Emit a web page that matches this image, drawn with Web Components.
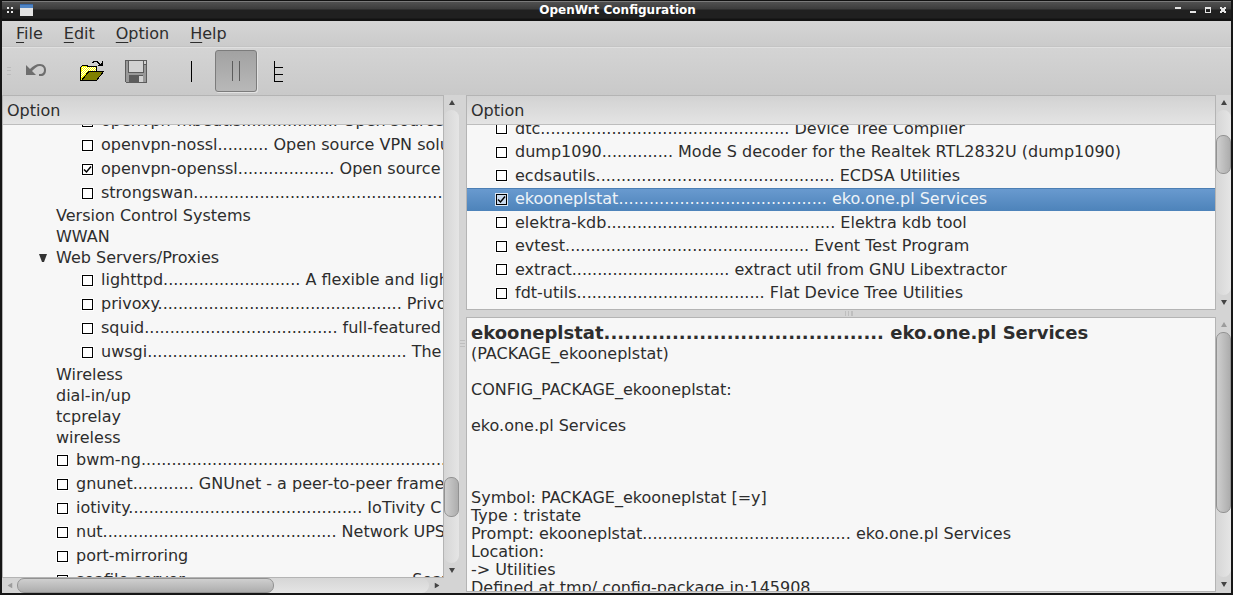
<!DOCTYPE html>
<html lang="en">
<head>
<meta charset="utf-8">
<title>OpenWrt Configuration</title>
<style>
  html, body { height: 100%; margin: 0; overflow: hidden; }
  body { font: 16px/18px "DejaVu Sans", sans-serif; color: #2d2d2d; background: #161616; }
</style>
</head>
<body>
<app-window>
  <span slot="title">OpenWrt Configuration</span>
  <menu-bar slot="bars">
    <menu-item key="F">ile</menu-item>
    <menu-item key="E">dit</menu-item>
    <menu-item key="O">ption</menu-item>
    <menu-item key="H">elp</menu-item>
  </menu-bar>
  <tool-bar slot="bars"></tool-bar>
  <tree-view class="menu" slot="left" heading="Option" style="--scrolled:-16px">
    <tree-item depth="2" check>openvpn-mbedtls................... Open source</tree-item>
    <tree-item depth="2" check>openvpn-nossl.......... Open source VPN solu</tree-item>
    <tree-item depth="2" check checked>openvpn-openssl................... Open source V</tree-item>
    <tree-item depth="2" check>strongswan..................................................</tree-item>
    <tree-item depth="1">Version Control Systems</tree-item>
    <tree-item depth="1">WWAN</tree-item>
    <tree-item depth="1" open>Web Servers/Proxies</tree-item>
    <tree-item depth="2" check>lighttpd........................... A flexible and ligh</tree-item>
    <tree-item depth="2" check>privoxy................................................ Privo</tree-item>
    <tree-item depth="2" check>squid...................................... full-featured W</tree-item>
    <tree-item depth="2" check>uwsgi................................................... The u</tree-item>
    <tree-item depth="1">Wireless</tree-item>
    <tree-item depth="1">dial-in/up</tree-item>
    <tree-item depth="1">tcprelay</tree-item>
    <tree-item depth="1">wireless</tree-item>
    <tree-item depth="1" check>bwm-ng............................................................</tree-item>
    <tree-item depth="1" check>gnunet............ GNUnet - a peer-to-peer framew</tree-item>
    <tree-item depth="1" check>iotivity.............................................. IoTivity C</tree-item>
    <tree-item depth="1" check>nut.............................................. Network UPS</tree-item>
    <tree-item depth="1" check>port-mirroring</tree-item>
    <tree-item depth="1" check>seafile-server............................................ Seaf</tree-item>
  </tree-view>
  <scroll-bar slot="left-v" before="369" thumb="38" after="46"></scroll-bar>
  <scroll-bar slot="left-h" horizontal before="0" thumb="256" after="156"></scroll-bar>
  <tree-view class="config" slot="list" heading="Option" even style="--scrolled:-8px">
    <tree-item depth="0" check>dtc................................................. Device Tree Compiler</tree-item>
    <tree-item depth="0" check>dump1090.............. Mode S decoder for the Realtek RTL2832U (dump1090)</tree-item>
    <tree-item depth="0" check>ecdsautils............................................... ECDSA Utilities</tree-item>
    <tree-item depth="0" check checked selected>ekooneplstat......................................... eko.one.pl Services</tree-item>
    <tree-item depth="0" check>elektra-kdb............................................. Elektra kdb tool</tree-item>
    <tree-item depth="0" check>evtest................................................ Event Test Program</tree-item>
    <tree-item depth="0" check>extract............................... extract util from GNU Libextractor</tree-item>
    <tree-item depth="0" check>fdt-utils..................................... Flat Device Tree Utilities</tree-item>
  </tree-view>
  <scroll-bar slot="list-v" before="25" thumb="38" after="123"></scroll-bar>
  <info-view slot="info">
    <span slot="heading">ekooneplstat......................................... eko.one.pl Services</span>(PACKAGE_ekooneplstat)

CONFIG_PACKAGE_ekooneplstat:

eko.one.pl Services



Symbol: PACKAGE_ekooneplstat [=y]
Type : tristate
Prompt: ekooneplstat......................................... eko.one.pl Services
Location:
-&gt; Utilities
Defined at tmp/.config-package.in:145908</info-view>
  <scroll-bar slot="info-v" at-start before="0" thumb="180" after="65"></scroll-bar>
</app-window>

<script>
class Base extends HTMLElement {
  connectedCallback() {
    if (this.shadowRoot) return;
    this.attachShadow({ mode: 'open' }).innerHTML = this.render();
  }
}

/* Window frame: title bar, bars, and the three split panes */
customElements.define('app-window', class extends Base {
  render() {
    return `<style>
      :host { display: flex; flex-direction: column; height: 100%; box-sizing: border-box;
        padding: 0 2px 2px; background: #161616; }
      header { display: flex; align-items: center; height: 21px; flex: none; box-sizing: border-box;
        padding: 0 1px 2px 3px; color: #fff;
        border-top: 1px solid #111;
        background: linear-gradient(#7a7a7a 0 1px, #505050 1px, #3c3c3c 8px, #202020 9px, #202020 17px, #121212 18px); }
      .side { flex: 1; display: flex; align-items: center; gap: 5px; }
      .side.right { justify-content: flex-end; gap: 0; }
      h1 { margin: 0; font: bold 12px/18px "DejaVu Sans", sans-serif; }
      .right button { all: unset; width: 15px; height: 16px; display: grid; place-items: center; }
      svg { display: block; }
      main { flex: 1; min-height: 0; display: grid; background: #d4d4d4;
        grid-template-columns: minmax(0, 464fr) minmax(0, 765fr); }
      .left { display: grid; min-height: 0; grid-template: minmax(0, 1fr) 15px / minmax(0, 1fr) 15px 7px; }
      .right-col { display: grid; min-height: 0; grid-template-rows: minmax(0, 215fr) 7px minmax(0, 276fr); }
      .pane { display: grid; grid-template: minmax(0, 1fr) / minmax(0, 1fr) 15px; min-height: 0; }
      .pane.info { padding-bottom: 1px; }
      .grip { display: grid; place-items: center; }
      .left .grip { grid-row: 1 / 3; grid-column: 3; }
      .left ::slotted(scroll-bar[horizontal]) { grid-row: 2; grid-column: 1; }
    </style>
    <header>
      <div class="side">
        <svg width="10" height="12" shape-rendering="crispEdges" fill="#e8e8e8"><path d="M2 3h2v2H2zM6 3h2v2H6zM2 7h2v2H2zM6 7h2v2H6z"/></svg>
        <svg width="13" height="12" viewBox="0 0 13 12"><path fill="#e4e4e4" d="M0 0h13v12H0z"/><path fill="#4f84c4" d="M0 0h13v4H0z"/><path fill="#3567a8" d="M0 0h13v1H0z"/></svg>
      </div>
      <h1><slot name="title"></slot></h1>
      <div class="side right">
        <button aria-label="Shade"><svg width="8" height="8" shape-rendering="crispEdges"><path fill="#e4e4e4" d="M1 1h6v2H1z"/></svg></button>
        <button aria-label="Minimize"><svg width="8" height="8" shape-rendering="crispEdges"><path fill="#e4e4e4" d="M1 5h6v2H1z"/></svg></button>
        <button aria-label="Maximize"><svg width="8" height="8" shape-rendering="crispEdges"><path fill="#e4e4e4" fill-rule="evenodd" d="M1 1h6v6H1zM2 3v3h4V3z"/></svg></button>
        <button aria-label="Close"><svg width="8" height="8" shape-rendering="crispEdges"><path fill="#e4e4e4" d="M1 1h2v1h2V1h2v2H6v2h1v2H5V6H3v1H1V5h1V3H1z"/></svg></button>
      </div>
    </header>
    <slot name="bars"></slot>
    <main>
      <div class="left">
        <slot name="left"></slot><slot name="left-v"></slot><slot name="left-h"></slot>
        <div class="grip"><svg width="5" height="8" shape-rendering="crispEdges"><path fill="#bebebe" d="M0 0h5v1H0zM0 3h5v1H0zM0 6h5v1H0z"/></svg></div>
      </div>
      <div class="right-col">
        <div class="pane"><slot name="list"></slot><slot name="list-v"></slot></div>
        <div class="grip"><svg width="8" height="5" shape-rendering="crispEdges"><path fill="#bebebe" d="M0 0h1v5H0zM3 0h1v5H3zM6 0h2v5H6z"/></svg></div>
        <div class="pane info"><slot name="info"></slot><slot name="info-v"></slot></div>
      </div>
    </main>`;
  }
});

customElements.define('menu-bar', class extends Base {
  render() {
    return `<style>
      :host { display: flex; flex: none; height: 26px; padding-left: 3px; box-sizing: border-box;
        background: linear-gradient(#d5d5d5, #cbcbcb); border-bottom: 1px solid #c4c4c4; }
    </style><slot></slot>`;
  }
});

customElements.define('menu-item', class extends Base {
  render() {
    return `<style>
      :host { display: block; }
      button { all: unset; height: 25px; line-height: 25px; padding: 0 11px 0 10px; }
      :host(:first-child) button { padding: 0 11px; }
      u { text-decoration-thickness: 1px; text-underline-offset: 3px; }
    </style><button><u>${this.getAttribute('key')}</u><slot></slot></button>`;
  }
});

customElements.define('tool-bar', class extends Base {
  render() {
    return `<style>
      :host { display: flex; flex: none; align-items: center; gap: 2px; height: 48px; box-sizing: border-box;
        border-top: 1px solid #e0e0e0; background: linear-gradient(#d4d4d4, #c9c9c9); padding-bottom: 1px; }
      button { all: unset; box-sizing: border-box; width: 42px; height: 42px; display: grid; place-items: center; }
      .handle { width: 11px; display: grid; justify-content: end; padding-right: 2px; box-sizing: border-box; }
      .gap { margin-left: 12px; }
      [aria-pressed=true] { border: 1px solid #7c7c7c; border-radius: 3px;
        background: linear-gradient(#a2a2a2, #b8b8b8); box-shadow: 1px 1px 0 #e2e2e2; }
      svg { display: block; }
    </style>
    <div class="handle"><svg width="4" height="8" shape-rendering="crispEdges"><path fill="#bcbcbc" d="M0 0h4v1H0zM0 3h4v1H0zM0 7h4v1H0z"/></svg></div>
    <button aria-label="Undo"><svg width="22" height="16" viewBox="0 0 22 16"><path fill="#6e6e6e" d="M1 2l4 4c3-3 6-5 10-5s6 3 6 6c0 4-2 6-5 6h-2v-2h1c3 0 4-2 4-4 0-3-2-4-4-4-3 0-5 2-8 5l4 4H1z"/></svg></button>
    <button class="gap" aria-label="Load"><svg width="24" height="22" viewBox="0 0 24 22" shape-rendering="crispEdges">
      <path fill="#ff0" stroke="#000" d="M.5 20.500V7.500L2.500 5.500H6.500L8.500 6.500H16.500V11.500H8.500L1.500 20.500z"/>
      <g stroke="#fff" stroke-dasharray="1 1"><path d="M2 7.500h14M3 8.500h13M2 9.500h14M3 10.500h13M2 11.500h6M1 12.500h6M2 13.500h4M1 14.500h4M2 15.500h2M1 16.500h2"/></g>
      <path fill="#808000" stroke="#000" d="M1.500 20.500L9 11.500H23.500L16.500 20.500z"/>
      <path fill="#000" d="M13 1h5v1h-5zM12 2h2v1h-2zM17 2h2v1h-2zM18 3h2v1h-2zM22 1h1v5h-5V5h1V4h2V3h1z"/></svg></button>
    <button aria-label="Save"><svg width="22" height="23" viewBox="0 0 22 23" shape-rendering="crispEdges">
      <path fill="#5c5c5c" d="M0 0h22v23H1L0 22z"/><path fill="#999" d="M1 1h2v21H1zM19 5h2v17h-2zM3 13h16v9H3z"/>
      <path fill="#d2d2d2" d="M4 1h14v11H4zM19 1h2v3h-2z"/><path fill="#5c5c5c" d="M4 15h14v8H4z"/><path fill="#d2d2d2" d="M14 16h4v6h-4z"/></svg></button>
    <button class="gap" aria-label="Single view"><svg width="2" height="21" shape-rendering="crispEdges"><path d="M0 0h1v21H0z"/></svg></button>
    <button aria-label="Split view" aria-pressed="true"><svg width="8" height="20" shape-rendering="crispEdges"><path fill="#5c5c5c" d="M0 0h1v20H0zM7 0h2v20H7z"/></svg></button>
    <button aria-label="Full view"><svg width="12" height="21" shape-rendering="crispEdges"><path d="M0 0h1v20h8v1H0zM1 6h8v1H1zM1 13h8v1H1z"/></svg></button>`;
  }
});

customElements.define('tree-view', class extends Base {
  render() {
    return `<style>
      :host { display: flex; flex-direction: column; min-width: 0; min-height: 0; overflow: hidden;
        box-sizing: border-box; border: 1px solid #b4b4b4; background: #f7f7f7; }
      .head { flex: none; height: 28px; line-height: 29px; padding-left: 4px;
        background: linear-gradient(#d2d2d2, #e4e4e4); border-bottom: 1px solid #bdbdbd; }
      .view { flex: 1; min-height: 0; overflow: hidden; }
      .rows { margin-top: var(--scrolled, 0); }
      :host([even]) .rows { display: grid; height: 188px; grid-auto-rows: 1fr; }
    </style>
    <div class="head">${this.getAttribute('heading')}</div>
    <div class="view"><div class="rows" role="tree"><slot></slot></div></div>`;
  }
});

customElements.define('tree-item', class extends Base {
  render() {
    const has = n => this.hasAttribute(n);
    const box = has('check') ? `<input type="checkbox" ${has('checked') ? 'checked' : ''}>` : '';
    return `<style>
      :host { display: flex; align-items: center; height: 21px; white-space: pre; }
      :host([check]) { height: 24px; }
      :host([depth="0"]) { padding-left: 28px; height: auto; }
      :host([depth="1"]) { padding-left: 53px; }
      :host([depth="2"]) { padding-left: 78px; }
      :host([open]) { padding-left: 36px; }
      :host([selected]) { color: #eef3f8; background: linear-gradient(#6a9bd0, #4d83ba); box-shadow: inset 0 1px #4c7fb4; }
      label { display: flex; align-items: center; }
      input { appearance: none; flex: none; width: 11px; height: 11px; margin: 0 8px 0 1px; background: #fff;
        border: 1px solid #000; outline: 1px solid #fff; display: grid; place-items: center; }
      input:checked { background: #fff url('data:image/svg+xml,<svg xmlns="http://www.w3.org/2000/svg" width="9" height="9"><path d="M1 4.500L3.500 7L8 1.500" fill="none" stroke="black" stroke-width="1.500"/></svg>') center no-repeat; }
      :host([selected]) input { background-color: #ccdbee; outline-color: #dbe6f3; }
      svg { margin-right: 9px; }
    </style>${has('open') ? '<svg width="8" height="8"><path fill="#333" d="M0 0h8L5 8H3z"/></svg>' : ''}
    <label>${box}<span><slot></slot></span></label>`;
  }
});

customElements.define('scroll-bar', class extends Base {
  render() {
    const g = n => this.getAttribute(n);
    return `<style>
      :host { display: flex; flex-direction: column; min-height: 0; min-width: 0; background: #d4d4d4; }
      :host([horizontal]) { flex-direction: row; }
      button { all: unset; flex: none; width: 15px; height: 15px; display: grid; place-items: center; color: #444; }
      :host([at-start]) button:first-of-type, :host([horizontal]) button:first-of-type { color: #9c9c9c; }
      .track { flex: 1; display: flex; flex-direction: inherit; min-height: 0; min-width: 0; border-radius: 8px;
        background: linear-gradient(90deg, #d6d6d6, #e5e5e5); }
      :host([horizontal]) .track { background: linear-gradient(#d6d6d6, #e5e5e5); }
      .thumb { box-sizing: border-box; border: 1px solid #929292; border-radius: 7px;
        background: linear-gradient(90deg, #cfcfcf, #adadad); }
      :host([horizontal]) .thumb { background: linear-gradient(#cfcfcf, #adadad); }
      :host([horizontal]) svg { transform: rotate(-90deg); }
    </style>
    <button aria-label="Back"><svg width="6" height="5"><path fill="currentColor" d="M3 0L6 5H0z"/></svg></button>
    <div class="track"><div style="flex:${g('before')} 0 0"></div><div class="thumb" style="flex:${g('thumb')} 0 0"></div><div style="flex:${g('after')} 0 0"></div></div>
    <button aria-label="Forward"><svg width="6" height="5"><path fill="currentColor" d="M0 0h6L3 5z"/></svg></button>`;
  }
});

customElements.define('info-view', class extends Base {
  render() {
    return `<style>
      :host { display: block; overflow: hidden; min-width: 0; min-height: 0; box-sizing: border-box;
        border: 1px solid #b4b4b4; background: #f7f7f7; padding: 3px 4px 0; }
      h2 { margin: 0; font-size: 18px; line-height: 24px; white-space: nowrap; }
      .text { white-space: pre; }
    </style><h2><slot name="heading"></slot></h2><div class="text"><slot></slot></div>`;
  }
  connectedCallback() {
    /* drop the indentation that precedes the slotted heading */
    const first = this.firstChild;
    if (first && first.nodeType === 3 && !first.data.trim()) first.remove();
    super.connectedCallback();
  }
});
</script>
</body>
</html>
